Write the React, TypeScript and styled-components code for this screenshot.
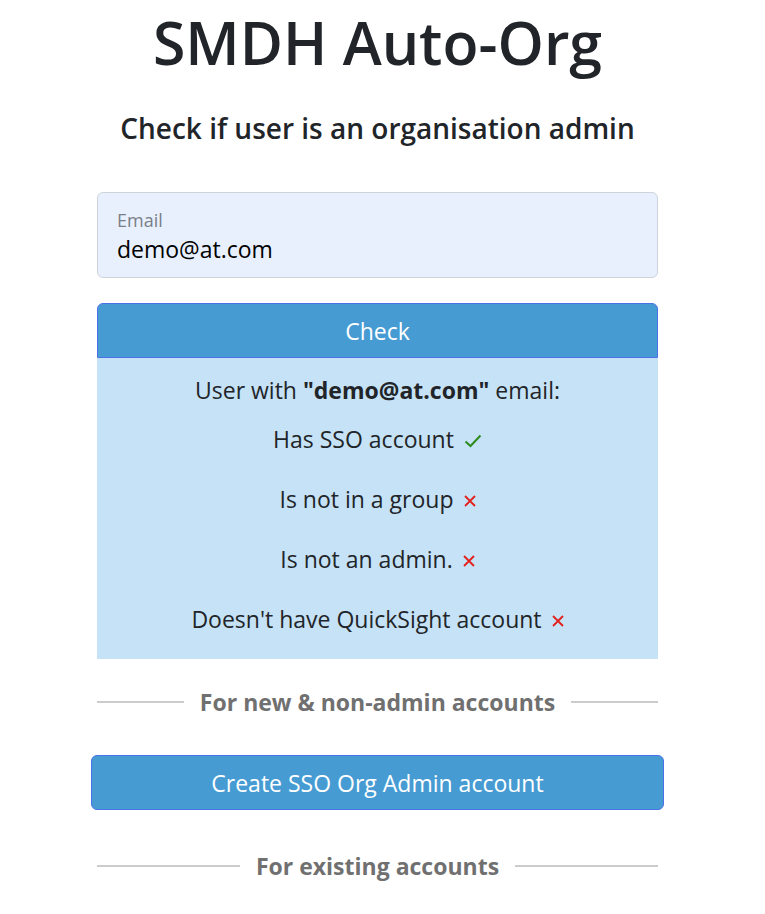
import styled, { createGlobalStyle } from "styled-components";

const GlobalStyle = createGlobalStyle`
  html, body {
    margin: 0;
    padding: 0;
    background: #ffffff;
  }
  body {
    font-family: "Open Sans", "Noto Sans", "Liberation Sans", sans-serif;
    color: #212529;
  }
`;

type Check = { label: string; ok: boolean };

const checks: Check[] = [
  { label: "Has SSO account", ok: true },
  { label: "Is not in a group", ok: false },
  { label: "Is not an admin.", ok: false },
  { label: "Doesn't have QuickSight account", ok: false },
];

const OkIcon = () => (
  <svg width="18" height="14" viewBox="0 0 18 14" fill="none">
    <path d="M1.5 7.5 L6.5 12 L16.5 1.5" stroke="#2e8b1e" strokeWidth="2" />
  </svg>
);

const FailIcon = () => (
  <svg width="12" height="12" viewBox="0 0 12 12" fill="none">
    <path d="M1 1 L11 11 M11 1 L1 11" stroke="#e3201c" strokeWidth="1.8" />
  </svg>
);

export default function App() {
  return (
    <Page>
      <GlobalStyle />
      <Main>
        <Title>SMDH Auto-Org</Title>
        <Subtitle>Check if user is an organisation admin</Subtitle>
        <Field>
          <FieldLabel>Email</FieldLabel>
          <FieldInput defaultValue="demo@at.com" />
        </Field>
        <PrimaryButton type="button" $attached>
          Check
        </PrimaryButton>
        <ResultPanel>
          <ResultIntro>
            User with <strong>"demo@at.com"</strong> email:
          </ResultIntro>
          {checks.map((c) => (
            <ResultRow key={c.label}>
              {c.label}
              <IconSlot>{c.ok ? <OkIcon /> : <FailIcon />}</IconSlot>
            </ResultRow>
          ))}
        </ResultPanel>
        <Divider $space={28}>
          <DividerText>For new &amp; non-admin accounts</DividerText>
        </Divider>
        <WideButton type="button">Create SSO Org Admin account</WideButton>
        <Divider $space={41}>
          <DividerText>For existing accounts</DividerText>
        </Divider>
      </Main>
    </Page>
  );
}

const Page = styled.div`
  display: flex;
  justify-content: center;
  padding-right: 10px;
`;

const Main = styled.main`
  width: 561px;
  display: flex;
  flex-direction: column;
`;

const Title = styled.h1`
  margin: 0;
  padding-top: 6px;
  font-size: 59px;
  font-weight: 600;
  line-height: 72px;
  text-align: center;
`;

const Subtitle = styled.h5`
  margin: 32px 0 0;
  font-size: 28px;
  font-weight: 600;
  line-height: 36px;
  text-align: center;
`;

const Field = styled.label`
  margin-top: 46px;
  height: 86px;
  box-sizing: border-box;
  border: 1px solid #ced4da;
  border-radius: 6px;
  background: #e8f0fe;
  padding: 14px 19px 0;
  display: flex;
  flex-direction: column;
`;

const FieldLabel = styled.span`
  font-size: 18px;
  line-height: 26px;
  color: #7a7f87;
`;

const FieldInput = styled.input`
  border: 0;
  outline: none;
  background: transparent;
  padding: 0;
  margin-top: 0;
  font-family: inherit;
  font-size: 23px;
  line-height: 32px;
  color: #000000;
`;

const PrimaryButton = styled.button<{ $attached?: boolean }>`
  margin-top: 25px;
  height: 55px;
  box-sizing: border-box;
  border: 1px solid #4a72e6;
  border-radius: ${(p) => (p.$attached ? "6px 6px 0 0" : "6px")};
  background: #469bd3;
  color: #ffffff;
  font-family: inherit;
  font-size: 23px;
  line-height: 32px;
  cursor: pointer;
`;

const WideButton = styled(PrimaryButton)`
  margin: 38px -6px 0;
`;

const ResultPanel = styled.section`
  background: #c6e2f6;
  padding: 14px 0 22px;
  display: flex;
  flex-direction: column;
  align-items: center;
  gap: 24px;
  font-size: 23px;
  line-height: 36px;
`;

const ResultIntro = styled.p`
  margin: 0 0 -11px;

  strong {
    font-weight: 700;
  }
`;

const ResultRow = styled.div`
  display: flex;
  align-items: center;
`;

const IconSlot = styled.span`
  display: inline-flex;
  margin-left: 10px;
  margin-top: 3px;
`;

const Divider = styled.div<{ $space: number }>`
  margin-top: ${(p) => p.$space}px;
  display: flex;
  align-items: center;
  gap: 16px;

  &::before,
  &::after {
    content: "";
    flex: 1;
    height: 2px;
    background: #cccccc;
  }
`;

const DividerText = styled.span`
  font-size: 23px;
  font-weight: 700;
  line-height: 30px;
  color: #707070;
`;
